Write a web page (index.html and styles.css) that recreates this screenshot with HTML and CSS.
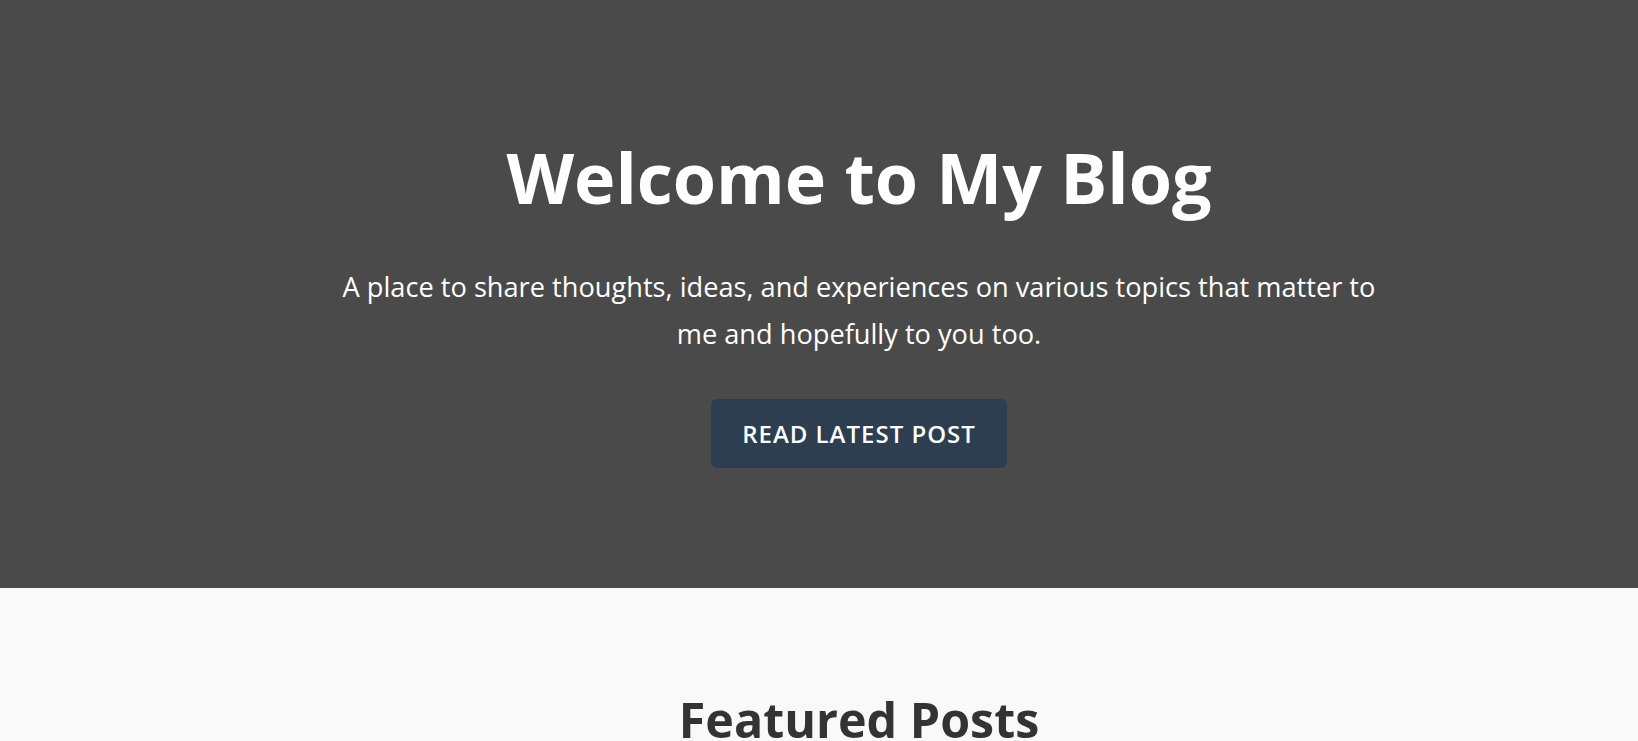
FILE: index.html
```html
<!DOCTYPE html>
<html lang="en">
<head>
<meta charset="utf-8">
<title>My Blog</title>
<link rel="stylesheet" href="styles.css">
</head>
<body>
  <header class="hero">
    <h1 class="hero-title">Welcome to My Blog</h1>
    <p class="hero-text">A place to share thoughts, ideas, and experiences on various topics that matter to me and hopefully to you too.</p>
    <a class="hero-btn" href="#">Read Latest Post</a>
  </header>
  <section class="featured">
    <h2 class="featured-title">Featured Posts</h2>
  </section>
</body>
</html>
```
FILE: styles.css
```css
html, body {
  margin: 0;
  padding: 0;
}
body {
  font-family: "Open Sans", "Noto Sans", sans-serif;
  background: #f9f9f9;
  color: #333;
}
.hero {
  box-sizing: content-box;
  width: 100%;
  background: #4a4a4a;
  color: #fff;
  display: flex;
  flex-direction: column;
  align-items: center;
  text-align: center;
  padding: 135px 40px 120px;
}
.hero-title {
  margin: 0;
  font-size: 70px;
  font-weight: 700;
  line-height: 1.2;
}
.hero-text {
  margin: 44px 0 0;
  max-width: 1050px;
  font-size: 27.2px;
  line-height: 47px;
}
.hero-btn {
  margin-top: 42px;
  display: inline-block;
  background: #2c3e50;
  color: #fff;
  text-decoration: none;
  text-transform: uppercase;
  font-weight: 600;
  font-size: 24px;
  letter-spacing: 1px;
  line-height: 69px;
  height: 69px;
  padding: 0 31px;
  border-radius: 6px;
}
.featured {
  box-sizing: content-box;
  width: 100%;
  padding: 102px 40px 60px;
  text-align: center;
}
.featured-title {
  margin: 0;
  font-size: 48.4px;
  font-weight: 700;
  line-height: 1.2;
  color: #333;
}
```
